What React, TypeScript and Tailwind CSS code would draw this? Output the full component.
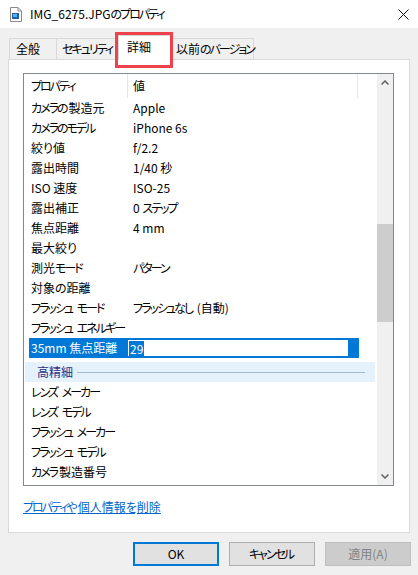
import React from 'react'

// Yu Gothic UI kana are much narrower than Noto's, so kana runs get tightened
function Jp({ text }: { text: string }) {
  const parts = text.split(/([\u3040-\u30ff]+)/)
  return (
    <>
      {parts.map((p, i) =>
        /[\u3040-\u30ff]/.test(p) ? (
          <span key={i} className="mr-[2px] tracking-[-2px]">
            {p}
          </span>
        ) : (
          <React.Fragment key={i}>{p}</React.Fragment>
        ),
      )}
    </>
  )
}

const rows: [string, string][] = [
  ['カメラの製造元', 'Apple'],
  ['カメラのモデル', 'iPhone 6s'],
  ['絞り値', 'f/2.2'],
  ['露出時間', '1/40 秒'],
  ['ISO 速度', 'ISO-25'],
  ['露出補正', '0 ステップ'],
  ['焦点距離', '4 mm'],
  ['最大絞り', ''],
  ['測光モード', 'パターン'],
  ['対象の距離', ''],
  ['フラッシュ モード', 'フラッシュなし (自動)'],
  ['フラッシュ エネルギー', ''],
]

const rows2 = ['レンズ メーカー', 'レンズ モデル', 'フラッシュ メーカー', 'フラッシュ モデル', 'カメラ製造番号']

function FileIcon() {
  return (
    <svg width="12" height="15" viewBox="0 0 12 15" className="shrink-0">
      <path d="M0.5 0.5 H8 L11.5 4 V14.5 H0.5 Z" fill="#fff" stroke="#8a8a8a" />
      <path d="M8 0.5 V4 H11.5" fill="none" stroke="#8a8a8a" />
      <rect x="2" y="6" width="7" height="6" fill="#1d5fa8" />
      <rect x="3" y="7" width="4" height="3" fill="#5fb2ef" />
    </svg>
  )
}

function Tab({ label, className }: { label: string; className: string }) {
  return (
    <div
      className={`flex h-[21px] items-center whitespace-nowrap border border-b-0 border-[#d9d9d9] bg-[#f0f0f0] ${className}`}
    >
      <span>
        <Jp text={label} />
      </span>
    </div>
  )
}

export default function App() {
  return (
    <div className="flex h-[575px] w-[418px] flex-col bg-[#f0f0f0] text-[12px] text-black [font-family:'Noto_Sans_CJK_JP',sans-serif] [font-feature-settings:'palt']">
      {/* title bar */}
      <div className="flex h-[28px] items-center bg-white pl-[10px] pr-[9px]">
        <FileIcon />
        <span className="ml-[8px] text-[12px]">
          <Jp text="IMG_6275.JPGのプロパティ" />
        </span>
        <svg width="11" height="11" viewBox="0 0 11 11" className="ml-auto">
          <path d="M0.5 0.5 L10.5 10.5 M10.5 0.5 L0.5 10.5" stroke="#111" strokeWidth="1" />
        </svg>
      </div>

      {/* tabs */}
      <div className="relative mt-[10px] flex h-[21px] items-end pl-[9px]">
        <Tab label="全般" className="w-[48px] pl-[6px]" />
        <Tab label="セキュリティ" className="w-[61px] border-l-0 pl-[5px]" />
        <div className="relative z-10 -mb-px flex h-[25px] w-[55px] items-center self-end border border-b-0 border-[#d9d9d9] bg-white px-[8px] pb-[3px]">
          詳細
        </div>
        <Tab label="以前のバージョン" className="w-[81px] border-l-0 pl-[3px]" />
        <div className="absolute left-[115px] top-[-6px] z-20 h-[36px] w-[58px] border-[3px] border-[#f0424b]" />
      </div>

      {/* panel */}
      <div className="ml-[8px] flex h-[474px] w-[402px] flex-col border border-[#d9d9d9] bg-white pl-[14px] pt-[13px]">
        <div className="flex h-[413px] w-[371px] border border-[#828790] bg-white">
          <div className="flex min-w-0 flex-1 flex-col">
            {/* header */}
            <div className="flex h-[24px] items-center">
              <div className="flex h-full w-[103px] items-center pl-[7px]">
                <span>
                  <Jp text="プロパティ" />
                </span>
              </div>
              <div className="h-full w-px bg-[#e5e5e5]" />
              <div className="flex h-full w-[229px] items-center pl-[5px]">値</div>
              <div className="h-full w-px bg-[#e5e5e5]" />
            </div>
            {rows.map(([k, v]) => (
              <div key={k} className="flex h-[20px] items-center">
                <div className="w-[104px] whitespace-nowrap pl-[7px]">
                  <Jp text={k} />
                </div>
                <div className="whitespace-nowrap pl-[5px]">
                  <Jp text={v} />
                </div>
              </div>
            ))}
            {/* selected row */}
            <div className="ml-[5px] flex h-[20px] w-[330px] items-center bg-[#0078d7] text-white">
              <div className="w-[98px] whitespace-nowrap pl-[2px]">35mm 焦点距離</div>
              <div className="flex h-[18px] w-[222px] items-center border border-[#0078d7] bg-white pl-px">
                <span className="bg-[#0078d7] px-px leading-[15px] text-white">29</span>
              </div>
            </div>
            {/* group */}
            <div className="mt-[4px] ml-px flex h-[20px] w-[350px] items-center bg-[#e5f1fb] pl-[12px] pr-[10px] text-[#1e3287]">
              <span>高精細</span>
              <div className="ml-[4px] h-px flex-1 bg-[#a3b6d3]" />
            </div>
            {rows2.map((k) => (
              <div key={k} className="flex h-[20px] items-center whitespace-nowrap pl-[7px]">
                <span>
                  <Jp text={k} />
                </span>
              </div>
            ))}
          </div>
          {/* scrollbar */}
          <div className="flex w-[16px] flex-col bg-[#f0f0f0]">
            <div className="flex h-[17px] items-center justify-center">
              <svg width="8" height="5" viewBox="0 0 8 5">
                <path d="M0.5 4.5 L4 1 L7.5 4.5" fill="none" stroke="#606060" strokeWidth="1.5" />
              </svg>
            </div>
            <div className="mt-[133px] h-[98px] bg-[#cdcdcd]" />
            <div className="mt-auto flex h-[17px] items-center justify-center">
              <svg width="8" height="5" viewBox="0 0 8 5">
                <path d="M0.5 0.5 L4 4 L7.5 0.5" fill="none" stroke="#606060" strokeWidth="1.5" />
              </svg>
            </div>
          </div>
        </div>
        <a className="mt-[12px] self-start text-[#0066cc] underline">
          <Jp text="プロパティや個人情報を削除" />
        </a>
      </div>

      {/* buttons */}
      <div className="mt-[9px] flex justify-end gap-[10px] pr-[7px]">
        <button className="h-[24px] w-[86px] border-2 border-[#0078d7] bg-[#e1e1e1]">OK</button>
        <button className="h-[24px] w-[86px] border border-[#adadad] bg-[#e1e1e1]">
          <Jp text="キャンセル" />
        </button>
        <button className="h-[24px] w-[86px] border border-[#bfbfbf] bg-[#cccccc] text-[#838383]">適用(A)</button>
      </div>
    </div>
  )
}
